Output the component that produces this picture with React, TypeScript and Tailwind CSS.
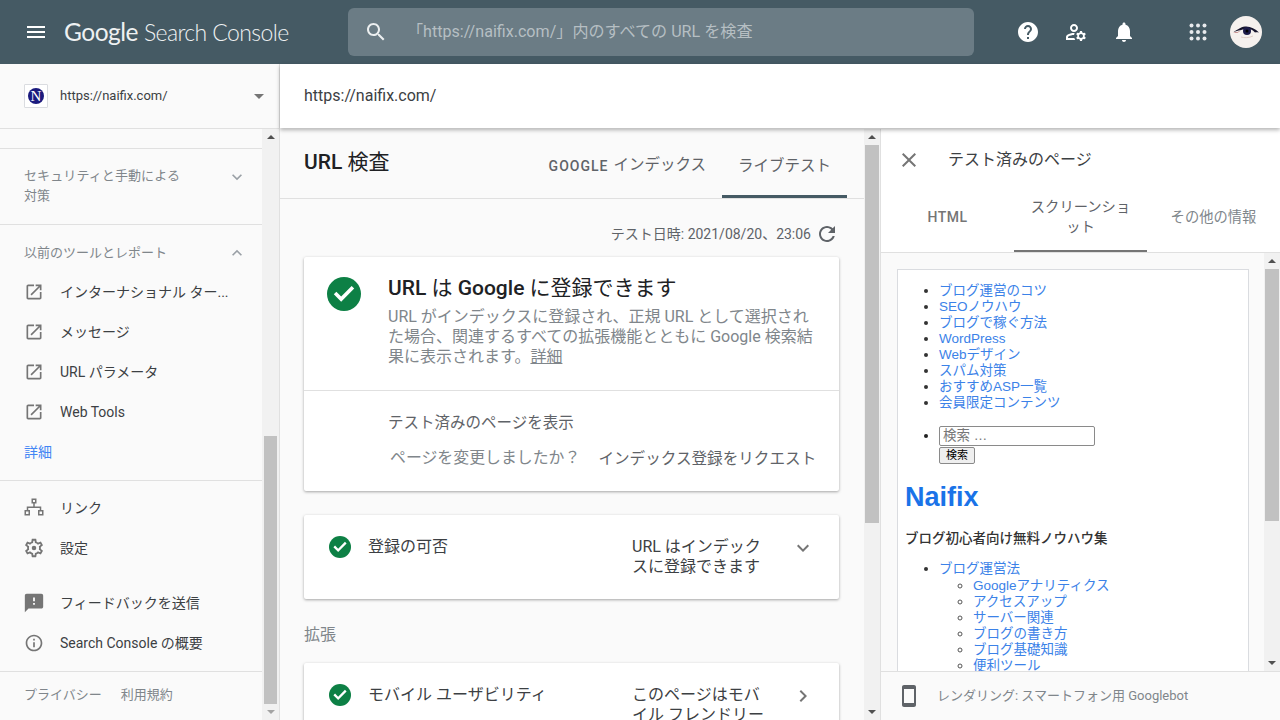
const JP = "font-['Roboto','Noto_Sans_CJK_JP',sans-serif]";

function Ic({ d, className }: { d: string; className: string }) {
  return (
    <svg viewBox="0 0 24 24" fill="currentColor" className={className}>
      <path d={d} />
    </svg>
  );
}

const P = {
  menu: "M3 18h18v-2H3v2zm0-5h18v-2H3v2zm0-7v2h18V6H3z",
  search: "M15.5 14h-.79l-.28-.27C15.41 12.59 16 11.11 16 9.5 16 5.91 13.09 3 9.5 3S3 5.91 3 9.5 5.91 16 9.5 16c1.61 0 3.09-.59 4.23-1.57l.27.28v.79l5 4.99L20.49 19l-4.99-5zm-6 0C7.01 14 5 11.99 5 9.5S7.01 5 9.5 5 14 7.01 14 9.5 11.99 14 9.5 14z",
  help: "M12 2C6.48 2 2 6.48 2 12s4.48 10 10 10 10-4.48 10-10S17.52 2 12 2zm1 17h-2v-2h2v2zm2.07-7.75l-.9.92C13.45 12.9 13 13.5 13 15h-2v-.5c0-1.1.45-2.1 1.17-2.83l1.24-1.26c.37-.36.59-.86.59-1.41 0-1.1-.9-2-2-2s-2 .9-2 2H8c0-2.21 1.79-4 4-4s4 1.79 4 4c0 .88-.36 1.68-.93 2.25z",
  manage: "M4 18v-.65c0-.34.16-.66.41-.81C6.1 15.53 8.03 15 10 15c.03 0 .05 0 .08.01.1-.7.3-1.37.59-1.98-.22-.02-.44-.03-.67-.03-2.42 0-4.68.67-6.61 1.82-.88.52-1.39 1.5-1.39 2.53V20h9.26c-.42-.6-.75-1.28-.97-2H4zM10 12c2.21 0 4-1.79 4-4s-1.79-4-4-4-4 1.79-4 4 1.79 4 4 4zm0-6c1.1 0 2 .9 2 2s-.9 2-2 2-2-.9-2-2 .9-2 2-2zM20.75 16c0-.22-.03-.42-.06-.63l1.14-1.01-1-1.73-1.45.49c-.32-.27-.68-.48-1.08-.63L18 11h-2l-.3 1.49c-.4.15-.76.36-1.08.63l-1.45-.49-1 1.73 1.14 1.01c-.03.21-.06.41-.06.63s.03.42.06.63l-1.14 1.01 1 1.73 1.45-.49c.32.27.68.48 1.08.63L16 21h2l.3-1.49c.4-.15.76-.36 1.08-.63l1.45.49 1-1.73-1.14-1.01c.03-.21.06-.41.06-.63zM17 18c-1.1 0-2-.9-2-2s.9-2 2-2 2 .9 2 2-.9 2-2 2z",
  bell: "M12 22c1.1 0 2-.9 2-2h-4c0 1.1.89 2 2 2zm6-6v-5c0-3.07-1.64-5.64-4.5-6.32V4c0-.83-.67-1.5-1.5-1.5s-1.5.67-1.5 1.5v.68C7.63 5.36 6 7.92 6 11v5l-2 2v1h16v-1l-2-2z",
  open: "M19 19H5V5h7V3H5c-1.11 0-2 .9-2 2v14c0 1.1.89 2 2 2h14c1.1 0 2-.9 2-2v-7h-2v7zM14 3v2h3.59l-9.83 9.83 1.41 1.41L19 6.41V10h2V3h-7z",
  settings: "M19.43 12.98c.04-.32.07-.64.07-.98s-.03-.66-.07-.98l2.11-1.65c.19-.15.24-.42.12-.64l-2-3.46c-.12-.22-.39-.3-.61-.22l-2.49 1c-.52-.4-1.08-.73-1.69-.98l-.38-2.65C14.46 2.18 14.25 2 14 2h-4c-.25 0-.46.18-.49.42l-.38 2.65c-.61.25-1.17.59-1.69.98l-2.49-1c-.23-.09-.49 0-.61.22l-2 3.46c-.13.22-.07.49.12.64l2.11 1.65c-.04.32-.07.65-.07.98s.03.66.07.98l-2.11 1.65c-.19.15-.24.42-.12.64l2 3.46c.12.22.39.3.61.22l2.49-1c.52.4 1.08.73 1.69.98l.38 2.65c.03.24.24.42.49.42h4c.25 0 .46-.18.49-.42l.38-2.65c.61-.25 1.17-.59 1.69-.98l2.49 1c.23.09.49 0 .61-.22l2-3.46c.12-.22.07-.49-.12-.64l-2.11-1.65zM17.45 11.27c.04.31.05.52.05.73 0 .21-.02.43-.05.73l-.14 1.13.89.7 1.08.84-.7 1.21-1.27-.51-1.04-.42-.9.68c-.43.32-.84.56-1.25.73l-1.06.43-.16 1.13-.2 1.35h-1.4l-.19-1.35-.16-1.13-1.06-.43c-.43-.18-.83-.41-1.23-.71l-.91-.7-1.06.43-1.27.51-.7-1.21 1.08-.84.89-.7-.14-1.13c-.03-.31-.05-.54-.05-.74s.02-.43.05-.73l.14-1.13-.89-.7-1.08-.84.7-1.21 1.27.51 1.04.42.9-.68c.43-.32.84-.56 1.25-.73l1.06-.43.16-1.13.2-1.35h1.39l.19 1.35.16 1.13 1.06.43c.43.18.83.41 1.23.71l.91.7 1.06-.43 1.27-.51.7 1.21-1.07.85-.89.7.14 1.13zM12 9.5a2.5 2.5 0 1 0 0 5 2.5 2.5 0 0 0 0-5z",
  feedback: "M20 2H4c-1.1 0-1.99.9-1.99 2L2 22l4-4h14c1.1 0 2-.9 2-2V4c0-1.1-.9-2-2-2zm-7 12h-2v-2h2v2zm0-4h-2V6h2v4z",
  info: "M11 7h2v2h-2zm0 4h2v6h-2zm1-9C6.48 2 2 6.48 2 12s4.48 10 10 10 10-4.48 10-10S17.52 2 12 2zm0 18c-4.41 0-8-3.59-8-8s3.59-8 8-8 8 3.59 8 8-3.59 8-8 8z",
  refresh: "M17.65 6.35C16.2 4.9 14.21 4 12 4c-4.42 0-7.99 3.58-7.99 8s3.57 8 7.99 8c3.73 0 6.84-2.55 7.73-6h-2.08c-.82 2.33-3.04 4-5.65 4-3.31 0-6-2.69-6-6s2.69-6 6-6c1.66 0 3.14.69 4.22 1.78L13 11h7V4l-2.35 2.35z",
  close: "M19 6.41L17.59 5 12 10.59 6.41 5 5 6.41 10.59 12 5 17.59 6.41 19 12 13.41 17.59 19 19 17.59 13.41 12z",
  phone: "M17 1.01L7 1c-1.1 0-2 .9-2 2v18c0 1.1.9 2 2 2h10c1.1 0 2-.9 2-2V3c0-1.1-.9-1.99-2-1.99zM17 19H7V5h10v14z",
  down: "M7.41 8.59L12 13.17l4.59-4.58L18 10l-6 6-6-6z",
  up: "M7.41 15.41L12 10.83l4.59 4.58L18 14l-6-6-6 6z",
  right: "M8.59 16.59L13.17 12 8.59 7.41 10 6l6 6-6 6z",
  link: "M9.500 2.500h5v5h-1.750v3h6.500v3.500H21.500v5.500h-5.500V14h1.750v-2H6.250v2H8v5.500H2.500V14h2.250v-3.500h6.500v-3H9.500v-5zM11 4v2h2V4h-2zM4 15.500v2.500h2.500v-2.500H4zm13.500 0v2.500H20v-2.500h-2.500z",
};

function CheckIcon({ className }: { className: string }) {
  return (
    <svg viewBox="0 0 24 24" className={className}>
      <circle cx="12" cy="12" r="12" fill="#0d8045" />
      <path d="M10 17.400l-5.200-5.200 1.800-1.800L10 13.800l7.400-7.400 1.800 1.800z" fill="#fff" />
    </svg>
  );
}

function Scrollbar({ thumbSpace, thumb, thumbW, arrowDark }: { thumbSpace: string; thumb: string; thumbW: string; arrowDark?: boolean }) {
  return (
    <div className="flex flex-col items-center bg-[#f1f1f1] h-full w-full">
      <div className="h-4 w-full flex items-center justify-center shrink-0">
        <div className="w-0 h-0 border-x-[4px] border-x-transparent border-b-[4px] border-b-[#505050]" />
      </div>
      <div className={thumbSpace} />
      <div className={`${thumb} ${thumbW} bg-[#c1c1c1] shrink-0`} />
      <div className="flex-1" />
      <div className="h-4 w-full flex items-center justify-center shrink-0">
        <div className={`w-0 h-0 border-x-[4px] border-x-transparent border-t-[4px] ${arrowDark ? "border-t-[#505050]" : "border-t-[#a3a3a3]"}`} />
      </div>
    </div>
  );
}

function SideItem({ icon, label, iconClass = "w-5 h-5" }: { icon: string; label: string; iconClass?: string }) {
  return (
    <div className="h-10 flex items-center pl-6 text-[14px] text-[#3c4043]">
      <span className="w-5 h-5 flex items-center justify-center text-[#757575] mr-4 shrink-0">
        <Ic d={icon} className={`${iconClass} shrink-0`} />
      </span>
      <span className="truncate">{label}</span>
    </div>
  );
}

function Sidebar() {
  return (
    <aside className="w-[280px] shrink-0 flex flex-col bg-[#fafafa] border-r border-[#e0e0e0]">
      <div className="h-[65px] shrink-0 border-b border-[#e0e0e0] flex items-center pl-6 pr-[15px]">
        <div className="w-6 h-6 bg-white border border-[#dadce0] rounded-[1px] flex items-center justify-center mr-3 shrink-0">
          <div className="w-4 h-4 rounded-full bg-[#1a1a7e] text-white flex items-center justify-center text-[15px] leading-none font-['Liberation_Serif',serif]">N</div>
        </div>
        <span className="text-[13px] text-[#3c4043] flex-1">https://naifix.com/</span>
        <div className="w-0 h-0 border-x-[5px] border-x-transparent border-t-[5px] border-t-[#757575]" />
      </div>
      <div className="flex-1 flex min-h-0">
        <div className="w-[262px] shrink-0 flex flex-col overflow-hidden">
          <div className="h-5 shrink-0 border-b border-[#e0e0e0]" />
          <div className="h-[76px] shrink-0 border-b border-[#e0e0e0] flex pl-6 pr-[15px] pt-[17px] justify-between text-[13px] leading-5 text-[#80868b]">
            <span className="w-[160px] tracking-[0.1px]">セキュリティと手動による対策</span>
            <Ic d={P.down} className="w-5 h-5 mt-[1px] text-[#9aa0a6]" />
          </div>
          <div className="h-[47px] shrink-0 flex items-center justify-between pl-6 pr-[15px] pt-2 text-[13px] text-[#80868b]">
            <span>以前のツールとレポート</span>
            <Ic d={P.up} className="w-5 h-5 text-[#9aa0a6]" />
          </div>
          <div className="shrink-0">
            <SideItem icon={P.open} label="インターナショナル ター..." />
            <SideItem icon={P.open} label="メッセージ" />
            <SideItem icon={P.open} label="URL パラメータ" />
            <SideItem icon={P.open} label="Web Tools" />
          </div>
          <div className="h-10 shrink-0 flex items-center pl-6 text-[14px] text-[#4285f4]">詳細</div>
          <div className="h-[9px] shrink-0 border-b border-[#e0e0e0]" />
          <div className="pt-[7px] shrink-0">
            <SideItem icon={P.link} label="リンク" iconClass="w-6 h-6" />
            <SideItem icon={P.settings} label="設定" iconClass="w-[22px] h-[22px]" />
          </div>
          <div className="pt-[15px] shrink-0">
            <SideItem icon={P.feedback} label="フィードバックを送信" iconClass="w-[22px] h-[22px]" />
            <SideItem icon={P.info} label="Search Console の概要" />
          </div>
          <div className="h-[9px] shrink-0 border-b border-[#e0e0e0]" />
          <div className="flex items-center gap-[19px] pl-6 h-[46px] shrink-0 text-[13px] text-[#80868b]">
            <span>プライバシー</span>
            <span>利用規約</span>
          </div>
        </div>
        <div className="w-[17px] shrink-0">
          <Scrollbar thumbSpace="h-[291px] shrink-0" thumb="h-[268px]" thumbW="w-[13px]" />
        </div>
      </div>
    </aside>
  );
}

function RowCard({ title, value, chevron, height }: { title: string; value: string; chevron: string; height: string }) {
  return (
    <div className={`${height} shrink-0 bg-white rounded-[2px] shadow-[0_1px_3px_rgba(0,0,0,0.35)] flex pl-[25px] pt-[21px] text-[16px] leading-5 text-[#3c4043]`}>
      <CheckIcon className="w-[22px] h-[22px] mr-[17px] shrink-0" />
      <span className="w-[264px] shrink-0 mt-[1px]">{title}</span>
      <span className="w-[136px] shrink-0 mt-[1px]">{value}</span>
      <Ic d={chevron} className="w-6 h-6 ml-[23px] text-[#757575]" />
    </div>
  );
}

function Center() {
  return (
    <div className="w-[600px] shrink-0 flex bg-[#fafafa]">
      <div className="w-[584px] shrink-0 flex flex-col overflow-hidden">
        <div className="h-[70px] shrink-0 border-b border-[#e0e0e0] flex justify-between pr-[17px] pl-6">
          <h1 className="text-[21px] leading-[66px] text-[#202124]"><span className="font-medium">URL</span> 検査</h1>
          <div className="flex">
            <div className="h-full flex items-center px-4 text-[#5f6368] pt-[5px]">
              <span className="text-[14px] font-medium tracking-[1px] mr-[5px]">GOOGLE</span>
              <span className="text-[15.500px]">インデックス</span>
            </div>
            <div className="h-full w-[125px] flex items-center justify-center border-b-[3px] border-[#455a64] text-[15.500px] text-[#5f6368] pt-[9px]">ライブテスト</div>
          </div>
        </div>
        <div className="h-[58px] shrink-0 flex items-center justify-end pr-[25px] pt-3 text-[14px] text-[#5f6368]">
          <span>テスト日時: 2021/08/20、23:06</span>
          <Ic d={P.refresh} className="w-6 h-6 ml-[4px] text-[#5f6368]" />
        </div>
        <div className="pl-6 pr-[25px] flex flex-col shrink-0">
          <div className="h-[234px] shrink-0 bg-white rounded-[2px] shadow-[0_1px_3px_rgba(0,0,0,0.35)] flex flex-col">
            <div className="h-[134px] shrink-0 border-b border-[#e0e0e0] flex pl-[23px] pt-[20px]">
              <CheckIcon className="w-[34px] h-[34px] mr-[27px] shrink-0" />
              <div className="w-[432px]">
                <div className="text-[21px] leading-[22px] text-[#202124]"><span className="font-medium">URL</span> は <span className="font-medium">Google</span> に登録できます</div>
                <div className="text-[16px] leading-5 text-[#80868b] mt-[8px]">
                  URL がインデックスに登録され、正規 URL として選択された場合、関連するすべての拡張機能とともに Google 検索結果に表示されます。<span className="underline">詳細</span>
                </div>
              </div>
            </div>
            <div className="pl-[84px] pt-[22px] text-[15.500px] text-[#5f6368] leading-5">テスト済みのページを表示</div>
            <div className="flex pl-[86px] pt-[15px] leading-5">
              <span className="text-[#80868b] text-[15.900px]">ページを変更しましたか？</span>
              <span className="ml-[18px] mt-[1px] text-[#5f6368] text-[15.600px]">インデックス登録をリクエスト</span>
            </div>
          </div>
          <div className="h-6 shrink-0" />
          <RowCard title="登録の可否" value="URL はインデックスに登録できます" chevron={P.down} height="h-[84px]" />
          <div className="h-[64px] shrink-0 flex items-center text-[16px] text-[#80868b] pt-[7px]">拡張</div>
          <RowCard title="モバイル ユーザビリティ" value="このページはモバイル フレンドリー" chevron={P.right} height="h-[84px]" />
        </div>
      </div>
      <div className="w-4 shrink-0">
        <Scrollbar thumbSpace="h-0" thumb="h-[378px]" thumbW="w-[14px]" arrowDark />
      </div>
    </div>
  );
}

function Preview() {
  const main = ["ブログ運営のコツ", "SEOノウハウ", "ブログで稼ぐ方法", "WordPress", "Webデザイン", "スパム対策", "おすすめASP一覧", "会員限定コンテンツ"];
  const sub = ["Googleアナリティクス", "アクセスアップ", "サーバー関連", "ブログの書き方", "ブログ基礎知識", "便利ツール"];
  return (
    <div className="w-[352px] ml-4 mt-4 bg-white border border-[#dadce0] h-[460px] shrink-0 overflow-hidden font-['Liberation_Sans','Noto_Sans_CJK_JP',sans-serif] text-[13.500px] leading-4 text-[#222] pt-[13px]">
      <ul className="list-disc pl-[41px] marker:text-[#333]">
        {main.map((m) => (
          <li key={m}><span className="text-[#3b82e8]">{m}</span></li>
        ))}
      </ul>
      <ul className="list-disc pl-[41px] mt-[15px]">
        <li>
          <div className="w-[156px] h-5 border border-[#8a8a8a] rounded-[2px] bg-white pl-[3px] text-[13.500px] leading-[18px] text-[#777]">検索 …</div>
          <div className="w-9 h-[17px] mt-[1px] border border-[#8a8a8a] rounded-[2px] bg-[#efefef] text-[11px] leading-[15px] text-center text-black">検索</div>
        </li>
      </ul>
      <div className="pl-[7px] mt-[18px] text-[27px] leading-[30px] font-bold text-[#1a73e8]">Naifix</div>
      <div className="pl-[7px] mt-[19px] font-medium text-[13.500px] leading-4 text-[#333]">ブログ初心者向け無料ノウハウ集</div>
      <ul className="list-disc pl-[41px] mt-[14px] marker:text-[#333]">
        <li>
          <span className="text-[#3b82e8]">ブログ運営法</span>
          <ul className="list-[circle] pl-[34px] mt-[1px] marker:text-[#555]">
            {sub.map((s) => (
              <li key={s}><span className="text-[#3b82e8]">{s}</span></li>
            ))}
          </ul>
        </li>
      </ul>
    </div>
  );
}

function RightPanel() {
  return (
    <div className="flex-1 min-w-0 flex flex-col border-l border-[#e0e0e0] bg-white">
      <div className="h-[60px] shrink-0 flex items-center pl-4 pt-[2px] text-[16px] text-[#3c4043]">
        <Ic d={P.close} className="w-6 h-6 text-[#757575] mr-[27px]" />
        <span>テスト済みのページ</span>
      </div>
      <div className="h-[64px] shrink-0 flex border-b border-[#e0e0e0] text-[#80868b]">
        <div className="w-[133px] shrink-0 flex items-center justify-center pb-[6px] text-[14px] font-medium tracking-[0.5px] text-[#757575]">HTML</div>
        <div className="w-[133px] shrink-0 flex items-center justify-center text-center px-4 pb-[5px] border-b-2 border-[#757575] text-[14.300px] leading-5 text-[#5f6368]">スクリーンショット</div>
        <div className="w-[133px] shrink-0 flex items-center justify-center pb-[6px] text-[14.300px]">その他の情報</div>
      </div>
      <div className="flex-1 min-h-0 flex bg-[#fafafa] overflow-hidden">
        <div className="w-[383px] shrink-0 min-h-0 overflow-hidden">
          <Preview />
        </div>
        <div className="w-4 shrink-0">
          <Scrollbar thumbSpace="h-0" thumb="h-[252px]" thumbW="w-[14px]" arrowDark />
        </div>
      </div>
      <div className="h-[49px] shrink-0 border-t border-[#e0e0e0] bg-[#fafafa] flex items-center pl-4 text-[13px] text-[#80868b]">
        <Ic d={P.phone} className="w-6 h-6 text-[#5f6368] mr-4" />
        <span>レンダリング: スマートフォン用 Googlebot</span>
      </div>
    </div>
  );
}

export default function App() {
  return (
    <div className={`w-[1280px] h-[720px] overflow-hidden flex flex-col ${JP}`}>
      <header className="h-16 shrink-0 bg-[#455a64] flex items-center text-white">
        <Ic d={P.menu} className="w-6 h-6 ml-6 mr-4 shrink-0" />
        <div className="w-[284px] shrink-0 text-[#eef1f2] font-['Lato',sans-serif] flex items-baseline gap-[6px]">
          <span className="font-normal text-[24.500px] tracking-[-0.5px]">Google</span>
          <span className="font-light text-[23px] tracking-[-0.6px]">Search Console</span>
        </div>
        <div className="w-[626px] h-12 shrink-0 rounded-[6px] bg-[#6b7c85] flex items-center pl-4 text-[16.100px] text-[#b6bfc3]">
          <Ic d={P.search} className="w-6 h-6 text-[#eceff0] mr-[19px] shrink-0" />
          <span>「https://naifix.com/」内のすべての URL を検査</span>
        </div>
        <div className="flex-1 flex items-center pl-[42px]">
          <Ic d={P.help} className="w-6 h-6" />
          <Ic d={P.manage} className="w-6 h-6 ml-[24px]" />
          <Ic d={P.bell} className="w-6 h-6 ml-[24px]" />
          <svg viewBox="0 0 24 24" fill="currentColor" className="w-6 h-6 ml-[50px] text-[#e8eaed]">
            <circle cx="5.500" cy="5.500" r="2" /><circle cx="12" cy="5.500" r="2" /><circle cx="18.500" cy="5.500" r="2" />
            <circle cx="5.500" cy="12" r="2" /><circle cx="12" cy="12" r="2" /><circle cx="18.500" cy="12" r="2" />
            <circle cx="5.500" cy="18.500" r="2" /><circle cx="12" cy="18.500" r="2" /><circle cx="18.500" cy="18.500" r="2" />
          </svg>
          <svg viewBox="0 0 32 32" className="w-8 h-8 ml-5 shrink-0">
            <circle cx="16" cy="16" r="16" fill="#f6f1ee" />
            <path d="M3 16c5-2 7-5 12-5.500 5-.5 10 2 14 6-2-.5-3-.5-4 0-2-2.500-4-3.500-8-3.500-5 0-8 2-14 3z" fill="#17152c" />
            <path d="M3 16.500c3 0 5-.5 7-1.500-1 1.500-4 2.500-7 1.500z" fill="#a34040" />
            <circle cx="17" cy="15" r="4" fill="#1d1b49" />
            <circle cx="17" cy="15" r="1.500" fill="#000" />
            <path d="M11 21c3 1 8 1 12-1" stroke="#d9c3bd" strokeWidth="0.800" fill="none" />
          </svg>
        </div>
      </header>
      <div className="flex-1 min-h-0 flex">
        <Sidebar />
        <div className="flex-1 min-w-0 flex flex-col">
          <div className="relative z-10 h-16 shrink-0 bg-white shadow-[0_2px_4px_rgba(0,0,0,0.3)] flex items-center pl-6 text-[16px] text-[#3c4043]">https://naifix.com/</div>
          <div className="flex-1 min-h-0 flex pt-[1px]">
            <Center />
            <RightPanel />
          </div>
        </div>
      </div>
    </div>
  );
}
